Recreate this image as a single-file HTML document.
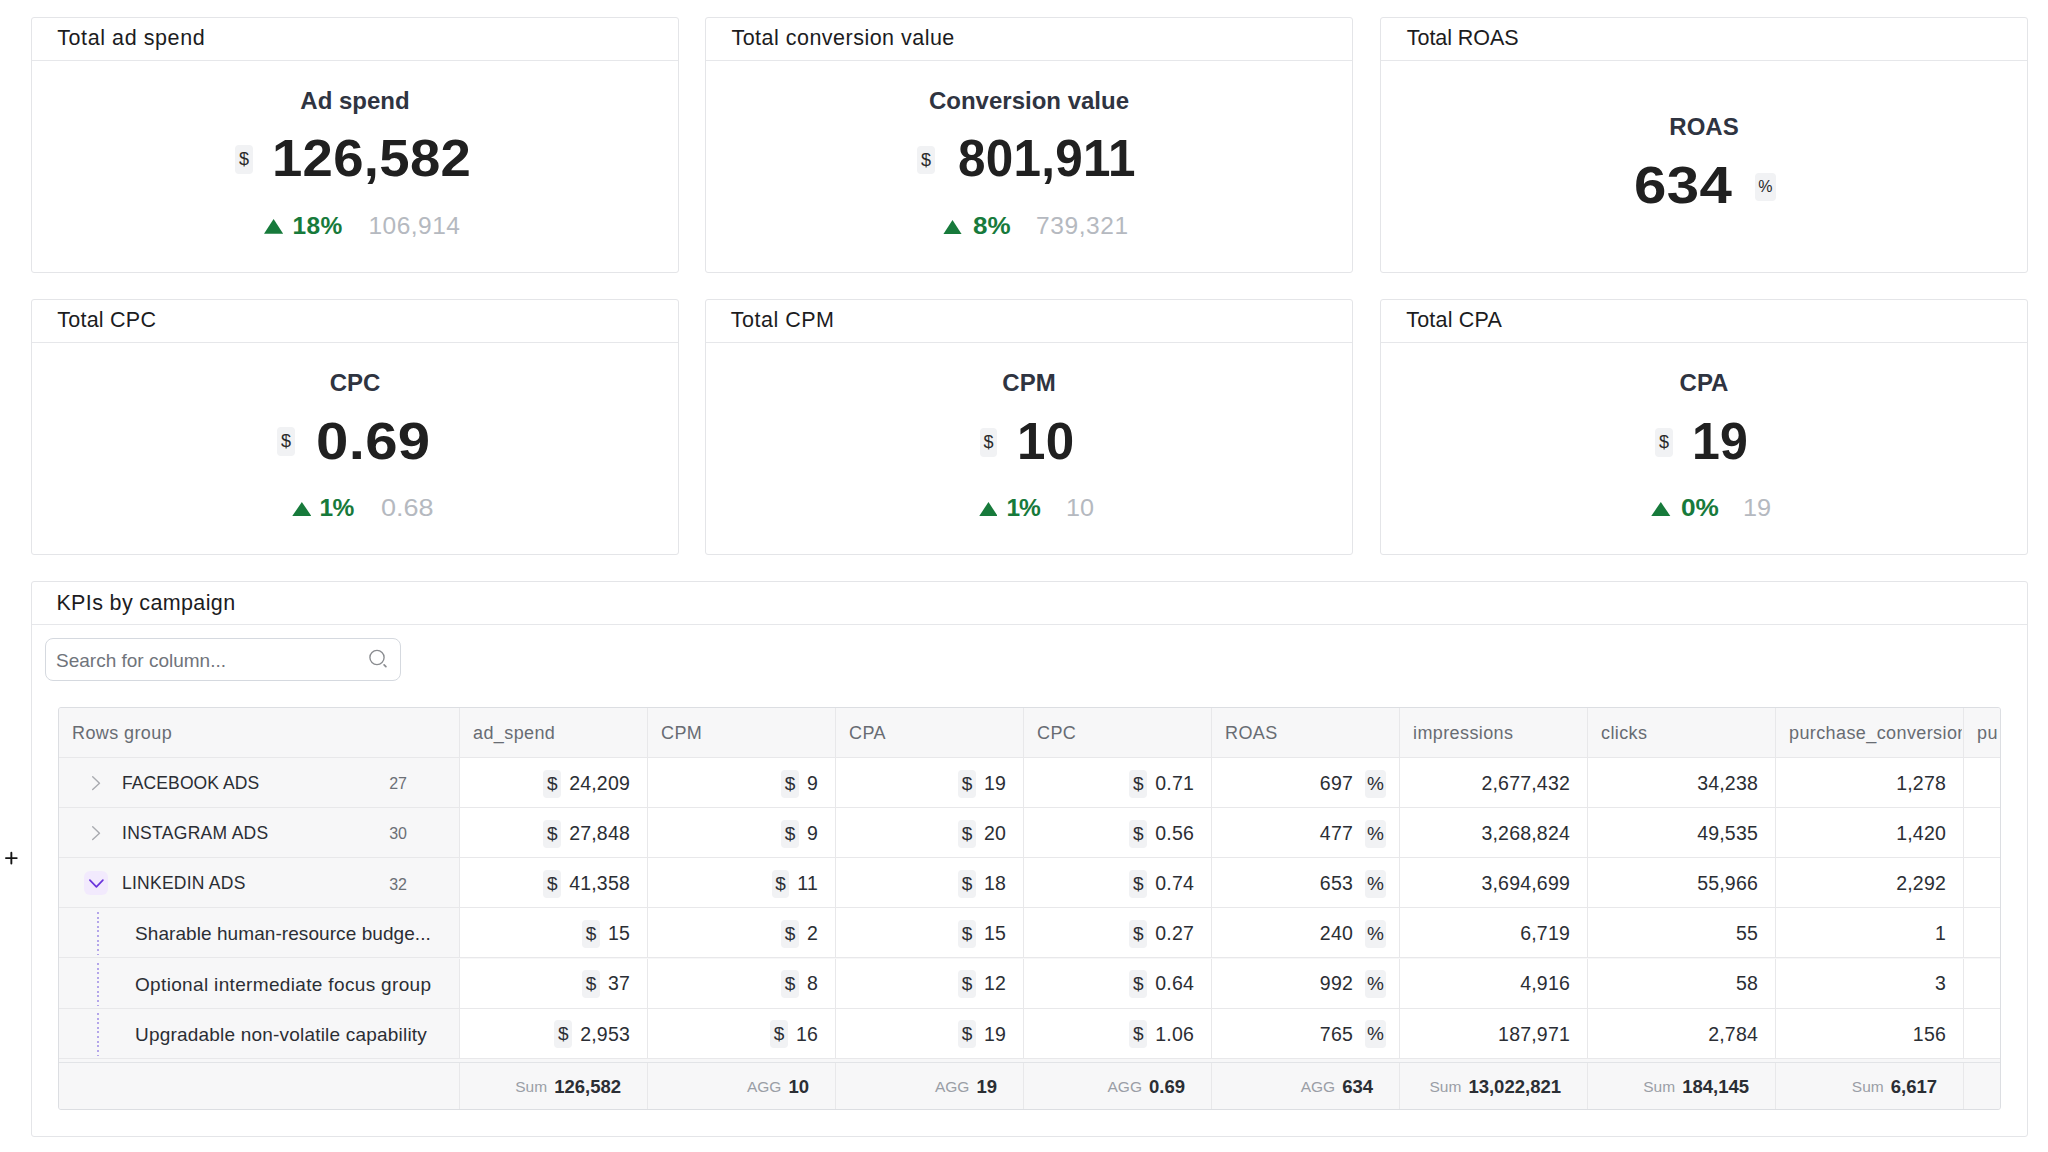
<!DOCTYPE html>
<html><head><meta charset="utf-8"><style>
*{box-sizing:border-box;margin:0;padding:0}
html,body{width:2048px;height:1152px;overflow:hidden;background:#fff;font-family:"Liberation Sans", sans-serif;}
.card{position:absolute;border:1px solid #e4e5e8;border-radius:3px;background:#fff;}
.card .hd{position:absolute;left:0;right:0;top:0;height:43px;border-bottom:1px solid #e6e7ea;}
.card .title{position:absolute;left:26px;font-size:21.5px;line-height:21.5px;color:#1c1c1e;white-space:nowrap;letter-spacing:0.4px;}
.lbl{position:absolute;left:0;right:0;text-align:center;font-size:24px;line-height:24px;font-weight:bold;color:#2f3441;white-space:nowrap}
.num{position:absolute;left:0;right:0;display:flex;justify-content:center;align-items:center;height:52px}
.num .v{font-size:52.5px;line-height:52px;font-weight:bold;color:#202020;letter-spacing:0.3px}
.num .pf{width:18.5px;height:29px;background:#f1f2f4;border-radius:4px;font-size:16px;line-height:29px;text-align:center;color:#2a2a2a}
.cmp{position:absolute;left:0;right:0;display:flex;justify-content:center;align-items:center;height:25px}
.cmp .pct{font-size:24.5px;line-height:25px;font-weight:bold;color:#177a3b}
.cmp .prev{font-size:24.5px;line-height:25px;color:#b5b9c0}
.tbl{position:absolute;left:58px;top:707px;width:1943px;height:403px;border:1px solid #dcdee2;border-radius:3px;overflow:hidden;background:#f7f7f8}
.row{position:absolute;left:0;height:50px;width:2200px;display:flex}
.c{position:relative;height:50px;border-right:1px solid #e8e8ea;border-bottom:1px solid #e8e8ea;width:188px;flex:none;background:#fff}
.c0{width:401px;background:#f7f7f8}
.hdr .c{background:#f7f7f8}
.hdr .t{position:absolute;left:13px;top:16.26px;font-size:18px;line-height:18px;color:#686c73;white-space:nowrap;letter-spacing:0.4px}
.gname{position:absolute;left:63px;font-size:17.5px;line-height:17.5px;color:#2a2d33;white-space:nowrap}
.gcnt{position:absolute;right:52px;font-size:16px;line-height:16px;color:#6b6f76}
.chev{position:absolute;left:25px;top:13px;width:24px;height:24px;border-radius:6px}
.dv{position:absolute;right:17px;top:1px;height:49px;display:flex;align-items:center}
.dv .n{font-size:19.5px;line-height:19.5px;color:#2b2e34;letter-spacing:0.2px}
.dv .b{width:17.8px;height:28px;background:#f1f2f4;border-radius:4px;font-size:19px;line-height:28.5px;text-align:center;color:#2b2e34;margin-right:8px}
.dv .bp{margin-right:0;margin-left:12px}
.sname{position:absolute;left:76px;font-size:19px;line-height:19px;color:#2b2e34;white-space:nowrap}
.dots{position:absolute;left:38px;top:4px;width:2px;height:43px;background:repeating-linear-gradient(to bottom,#b4a6ea 0 2px,transparent 2px 4.62px)}
.ftr .c{background:#f7f7f8;border-bottom:none;height:47px}
.fv{position:absolute;right:26px;top:0;height:47px;display:flex;align-items:center;white-space:nowrap}
.fv .k{font-size:15.5px;color:#9a9ea6;margin-right:7px}
.fv .val{font-size:18.5px;font-weight:bold;color:#2b2e34}
.bnum{position:absolute;font-size:52.5px;line-height:52.5px;font-weight:bold;color:#202020;white-space:nowrap}
.pbox{position:absolute;background:#f1f2f4;border-radius:4px;font-size:18px;text-align:center;color:#2a2a2a}
.cpct{position:absolute;font-size:24.5px;line-height:24.5px;font-weight:bold;color:#177a3b;white-space:nowrap}
.cprev{position:absolute;font-size:24.5px;line-height:24.5px;color:#b5b9c0;white-space:nowrap}
.search{position:absolute;left:45px;top:638px;width:356px;height:43px;border:1.5px solid #d5d9df;border-radius:8px;background:#fff}
.search .ph{position:absolute;left:10px;font-size:19px;line-height:19px;color:#70747b;white-space:nowrap}
</style></head>
<body>
<div class="card" style="left:31px;top:17px;width:648px;height:256px"><div class="hd"><div class="title" style="top:9.80px;letter-spacing:0.584px;margin-left:-0.8px">Total ad spend</div></div><div class="lbl" style="top:71.18px">Ad spend</div></div><div class="card" style="left:705px;top:17px;width:648px;height:256px"><div class="hd"><div class="title" style="top:9.80px;letter-spacing:0.485px;margin-left:-0.6px">Total conversion value</div></div><div class="lbl" style="top:71.18px">Conversion value</div></div><div class="card" style="left:1380px;top:17px;width:648px;height:256px"><div class="hd"><div class="title" style="top:9.80px;letter-spacing:-0.067px;margin-left:-0.2px">Total ROAS</div></div><div class="lbl" style="top:96.88px">ROAS</div></div><div class="card" style="left:31px;top:299px;width:648px;height:256px"><div class="hd"><div class="title" style="top:9.80px;letter-spacing:0.251px;margin-left:-0.8px">Total CPC</div></div><div class="lbl" style="top:71.18px">CPC</div></div><div class="card" style="left:705px;top:299px;width:648px;height:256px"><div class="hd"><div class="title" style="top:9.80px;letter-spacing:0.5px;margin-left:-1.2px">Total CPM</div></div><div class="lbl" style="top:71.18px">CPM</div></div><div class="card" style="left:1380px;top:299px;width:648px;height:256px"><div class="hd"><div class="title" style="top:9.80px;letter-spacing:0.201px;margin-left:-0.8px">Total CPA</div></div><div class="lbl" style="top:71.18px">CPA</div></div><div class="bnum" style="left:272.00px;top:131.96px;letter-spacing:0.30px;transform:scaleX(1.0378);transform-origin:0 0">126,582</div><div class="pbox" style="left:234.80px;top:145.00px;width:18.40px;height:29.40px;line-height:29.40px;font-size:18px">$</div><svg width="19.20" height="14.80" viewBox="0 0 19.20 14.80" style="position:absolute;left:264.30px;top:219.40px"><path d="M9.60 0 L19.20 14.80 L0 14.80 Z" fill="#177a3b"/></svg><div class="cpct" style="left:292.40px;top:214.26px;letter-spacing:0.40px;transform:scaleX(1.0000);transform-origin:0 0">18%</div><div class="cprev" style="left:368.40px;top:214.26px;letter-spacing:0.50px;transform:scaleX(1.0000);transform-origin:0 0">106,914</div><div class="bnum" style="left:957.60px;top:131.96px;letter-spacing:0.30px;transform:scaleX(0.9405);transform-origin:0 0">801,911</div><div class="pbox" style="left:917.10px;top:145.90px;width:17.70px;height:28.00px;line-height:28.00px;font-size:18px">$</div><svg width="19.00" height="14.70" viewBox="0 0 19.00 14.70" style="position:absolute;left:943.00px;top:219.70px"><path d="M9.50 0 L19.00 14.70 L0 14.70 Z" fill="#177a3b"/></svg><div class="cpct" style="left:972.60px;top:214.26px;letter-spacing:0.00px;transform:scaleX(1.0618);transform-origin:0 0">8%</div><div class="cprev" style="left:1035.90px;top:214.26px;letter-spacing:0.63px;transform:scaleX(1.0000);transform-origin:0 0">739,321</div><div class="bnum" style="left:1633.80px;top:158.86px;letter-spacing:0.30px;transform:scaleX(1.1082);transform-origin:0 0">634</div><div class="pbox" style="left:1754.60px;top:172.80px;width:21.40px;height:28.20px;line-height:28.20px;font-size:16px">%</div><div class="bnum" style="left:315.70px;top:414.96px;letter-spacing:0.30px;transform:scaleX(1.1071);transform-origin:0 0">0.69</div><div class="pbox" style="left:277.00px;top:427.00px;width:18.00px;height:29.00px;line-height:29.00px;font-size:18px">$</div><svg width="19.70" height="14.40" viewBox="0 0 19.70 14.40" style="position:absolute;left:291.70px;top:501.60px"><path d="M9.85 0 L19.70 14.40 L0 14.40 Z" fill="#177a3b"/></svg><div class="cpct" style="left:319.60px;top:496.26px;letter-spacing:-0.60px;transform:scaleX(1.0000);transform-origin:0 0">1%</div><div class="cprev" style="left:381.10px;top:496.26px;letter-spacing:0.00px;transform:scaleX(1.1022);transform-origin:0 0">0.68</div><div class="bnum" style="left:1017.20px;top:414.96px;letter-spacing:0.30px;transform:scaleX(0.9736);transform-origin:0 0">10</div><div class="pbox" style="left:980.10px;top:428.10px;width:16.70px;height:29.20px;line-height:29.20px;font-size:18px">$</div><svg width="18.90" height="14.40" viewBox="0 0 18.90 14.40" style="position:absolute;left:978.60px;top:501.60px"><path d="M9.45 0 L18.90 14.40 L0 14.40 Z" fill="#177a3b"/></svg><div class="cpct" style="left:1006.40px;top:496.26px;letter-spacing:-1.00px;transform:scaleX(1.0000);transform-origin:0 0">1%</div><div class="cprev" style="left:1066.00px;top:496.26px;letter-spacing:0.00px;transform:scaleX(1.0280);transform-origin:0 0">10</div><div class="bnum" style="left:1692.00px;top:414.96px;letter-spacing:0.30px;transform:scaleX(0.9528);transform-origin:0 0">19</div><div class="pbox" style="left:1654.70px;top:428.10px;width:18.70px;height:29.20px;line-height:29.20px;font-size:18px">$</div><svg width="19.60" height="14.40" viewBox="0 0 19.60 14.40" style="position:absolute;left:1651.30px;top:501.60px"><path d="M9.80 0 L19.60 14.40 L0 14.40 Z" fill="#177a3b"/></svg><div class="cpct" style="left:1681.10px;top:496.26px;letter-spacing:0.00px;transform:scaleX(1.0706);transform-origin:0 0">0%</div><div class="cprev" style="left:1743.20px;top:496.26px;letter-spacing:0.00px;transform:scaleX(1.0320);transform-origin:0 0">19</div><div class="card" style="left:31px;top:581px;width:1997px;height:556px"><div class="hd"><div class="title" style="top:11.00px;letter-spacing:0.36px;margin-left:-1.6px">KPIs by campaign</div></div></div><div class="search"><div class="ph" style="top:11.62px">Search for column...</div><svg width="26" height="26" viewBox="0 0 26 26" style="position:absolute;left:317.5px;top:7px"><circle cx="13" cy="11.5" r="7.1" fill="none" stroke="#8a8c90" stroke-width="1.35"/><path d="M20.1 18.8 L21.9 20.6" stroke="#8a8c90" stroke-width="1.7" stroke-linecap="round"/></svg></div><div class="tbl"><div class="row hdr" style="top:0"><div class="c c0"><div class="t">Rows group</div></div><div class="c"><div class="t">ad_spend</div></div><div class="c"><div class="t">CPM</div></div><div class="c"><div class="t">CPA</div></div><div class="c"><div class="t">CPC</div></div><div class="c"><div class="t">ROAS</div></div><div class="c"><div class="t">impressions</div></div><div class="c"><div class="t">clicks</div></div><div class="c"><div class="t" style="width:173px;height:24px;overflow:hidden">purchase_conversions</div></div><div class="c"><div class="t" style="width:21px;height:24px;overflow:hidden">purchase</div></div></div><div class="row" style="top:50.0px"><div class="c c0"><svg width="24" height="24" viewBox="0 0 24 24" class="chev"><path d="M8.7 5.7 L15.5 12.15 L8.7 18.6" fill="none" stroke="#a9abb0" stroke-width="1.4" stroke-linecap="round" stroke-linejoin="round"/></svg><div class="gname" style="top:16.99px;letter-spacing:0.1px">FACEBOOK ADS</div><div class="gcnt" style="top:18.26px">27</div></div><div class="c"><div class="dv"><div class="b">$</div><div class="n">24,209</div></div></div><div class="c"><div class="dv"><div class="b">$</div><div class="n">9</div></div></div><div class="c"><div class="dv"><div class="b">$</div><div class="n">19</div></div></div><div class="c"><div class="dv"><div class="b">$</div><div class="n">0.71</div></div></div><div class="c"><div class="dv" style="right:13px"><div class="n">697</div><div class="b bp" style="width:21px">%</div></div></div><div class="c"><div class="dv"><div class="n">2,677,432</div></div></div><div class="c"><div class="dv"><div class="n">34,238</div></div></div><div class="c"><div class="dv"><div class="n">1,278</div></div></div><div class="c"></div></div><div class="row" style="top:100.15px"><div class="c c0"><svg width="24" height="24" viewBox="0 0 24 24" class="chev"><path d="M8.7 5.7 L15.5 12.15 L8.7 18.6" fill="none" stroke="#a9abb0" stroke-width="1.4" stroke-linecap="round" stroke-linejoin="round"/></svg><div class="gname" style="top:16.99px;letter-spacing:0.3px">INSTAGRAM ADS</div><div class="gcnt" style="top:18.26px">30</div></div><div class="c"><div class="dv"><div class="b">$</div><div class="n">27,848</div></div></div><div class="c"><div class="dv"><div class="b">$</div><div class="n">9</div></div></div><div class="c"><div class="dv"><div class="b">$</div><div class="n">20</div></div></div><div class="c"><div class="dv"><div class="b">$</div><div class="n">0.56</div></div></div><div class="c"><div class="dv" style="right:13px"><div class="n">477</div><div class="b bp" style="width:21px">%</div></div></div><div class="c"><div class="dv"><div class="n">3,268,824</div></div></div><div class="c"><div class="dv"><div class="n">49,535</div></div></div><div class="c"><div class="dv"><div class="n">1,420</div></div></div><div class="c"></div></div><div class="row" style="top:150.3px"><div class="c c0"><div class="chev" style="background:#f2eafd"><svg width="24" height="24" viewBox="0 0 24 24" style="display:block"><path d="M5.9 9.2 L12.4 15.9 L18.9 9.2" fill="none" stroke="#6a35dc" stroke-width="1.7" stroke-linecap="round" stroke-linejoin="round"/></svg></div><div class="gname" style="top:16.99px;letter-spacing:0.25px">LINKEDIN ADS</div><div class="gcnt" style="top:18.26px">32</div></div><div class="c"><div class="dv"><div class="b">$</div><div class="n">41,358</div></div></div><div class="c"><div class="dv"><div class="b">$</div><div class="n">11</div></div></div><div class="c"><div class="dv"><div class="b">$</div><div class="n">18</div></div></div><div class="c"><div class="dv"><div class="b">$</div><div class="n">0.74</div></div></div><div class="c"><div class="dv" style="right:13px"><div class="n">653</div><div class="b bp" style="width:21px">%</div></div></div><div class="c"><div class="dv"><div class="n">3,694,699</div></div></div><div class="c"><div class="dv"><div class="n">55,966</div></div></div><div class="c"><div class="dv"><div class="n">2,292</div></div></div><div class="c"></div></div><div class="row" style="top:200.45px"><div class="c c0"><div class="dots"></div><div class="sname" style="top:15.92px;letter-spacing:0.07px">Sharable human-resource budge...</div></div><div class="c"><div class="dv"><div class="b">$</div><div class="n">15</div></div></div><div class="c"><div class="dv"><div class="b">$</div><div class="n">2</div></div></div><div class="c"><div class="dv"><div class="b">$</div><div class="n">15</div></div></div><div class="c"><div class="dv"><div class="b">$</div><div class="n">0.27</div></div></div><div class="c"><div class="dv" style="right:13px"><div class="n">240</div><div class="b bp" style="width:21px">%</div></div></div><div class="c"><div class="dv"><div class="n">6,719</div></div></div><div class="c"><div class="dv"><div class="n">55</div></div></div><div class="c"><div class="dv"><div class="n">1</div></div></div><div class="c"></div></div><div class="row" style="top:250.6px"><div class="c c0"><div class="dots"></div><div class="sname" style="top:15.92px;letter-spacing:0.34px">Optional intermediate focus group</div></div><div class="c"><div class="dv"><div class="b">$</div><div class="n">37</div></div></div><div class="c"><div class="dv"><div class="b">$</div><div class="n">8</div></div></div><div class="c"><div class="dv"><div class="b">$</div><div class="n">12</div></div></div><div class="c"><div class="dv"><div class="b">$</div><div class="n">0.64</div></div></div><div class="c"><div class="dv" style="right:13px"><div class="n">992</div><div class="b bp" style="width:21px">%</div></div></div><div class="c"><div class="dv"><div class="n">4,916</div></div></div><div class="c"><div class="dv"><div class="n">58</div></div></div><div class="c"><div class="dv"><div class="n">3</div></div></div><div class="c"></div></div><div class="row" style="top:300.75px"><div class="c c0"><div class="dots"></div><div class="sname" style="top:15.92px;letter-spacing:0.2px">Upgradable non-volatile capability</div></div><div class="c"><div class="dv"><div class="b">$</div><div class="n">2,953</div></div></div><div class="c"><div class="dv"><div class="b">$</div><div class="n">16</div></div></div><div class="c"><div class="dv"><div class="b">$</div><div class="n">19</div></div></div><div class="c"><div class="dv"><div class="b">$</div><div class="n">1.06</div></div></div><div class="c"><div class="dv" style="right:13px"><div class="n">765</div><div class="b bp" style="width:21px">%</div></div></div><div class="c"><div class="dv"><div class="n">187,971</div></div></div><div class="c"><div class="dv"><div class="n">2,784</div></div></div><div class="c"><div class="dv"><div class="n">156</div></div></div><div class="c"></div></div><div class="row ftr" style="top:354px;border-top:1px solid #e2e4e7;height:48px"><div class="c c0"></div><div class="c"><div class="fv"><span class="k">Sum</span><span class="val">126,582</span></div></div><div class="c"><div class="fv"><span class="k">AGG</span><span class="val">10</span></div></div><div class="c"><div class="fv"><span class="k">AGG</span><span class="val">19</span></div></div><div class="c"><div class="fv"><span class="k">AGG</span><span class="val">0.69</span></div></div><div class="c"><div class="fv"><span class="k">AGG</span><span class="val">634</span></div></div><div class="c"><div class="fv"><span class="k">Sum</span><span class="val">13,022,821</span></div></div><div class="c"><div class="fv"><span class="k">Sum</span><span class="val">184,145</span></div></div><div class="c"><div class="fv"><span class="k">Sum</span><span class="val">6,617</span></div></div><div class="c"></div></div></div><svg width="16" height="16" viewBox="0 0 16 16" style="position:absolute;left:3px;top:849.5px"><path d="M8.35 2.7 V13.5 M2.95 8.1 H13.75" stroke="#151515" stroke-width="1.9" stroke-linecap="round"/></svg>
</body></html>
